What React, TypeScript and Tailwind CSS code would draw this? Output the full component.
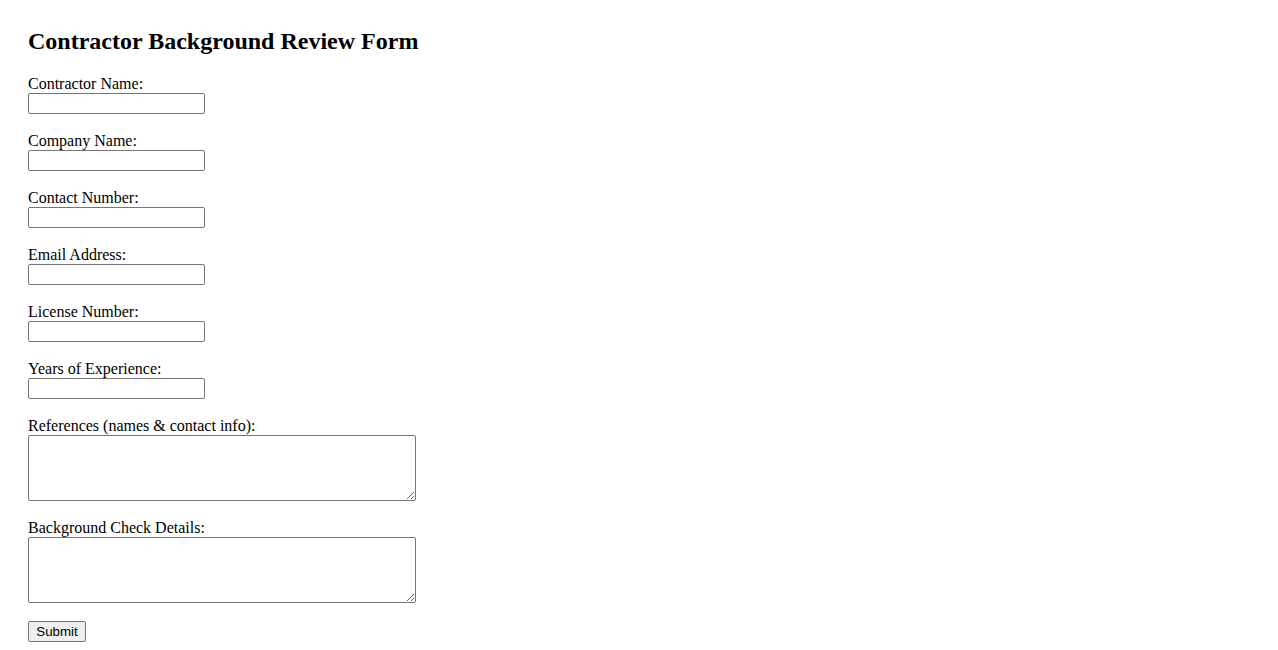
import React from "react";

const inputs = [
  "Contractor Name:",
  "Company Name:",
  "Contact Number:",
  "Email Address:",
  "License Number:",
  "Years of Experience:",
];

const areas = ["References (names & contact info):", "Background Check Details:"];

export default function App() {
  return (
    <div
      className="min-h-[650px] bg-white text-black px-[28px] pt-[28px]"
      style={{ fontFamily: '"Liberation Serif", "Times New Roman", serif' }}
    >
      <h2 className="text-[24px] font-bold leading-[27px] mb-[20px]">
        Contractor Background Review Form
      </h2>
      <form className="flex flex-col items-start" onSubmit={(e) => e.preventDefault()}>
        {inputs.map((l) => (
          <div key={l} className="flex flex-col items-start mb-[18px]">
            <label className="block text-[16px] leading-[18px]">{l}</label>
            <input
              type="text"
              className="block w-[177px] h-[21px] border border-[#767676] rounded-[2px] bg-white px-[2px] text-[13.333px] outline-none"
              style={{ fontFamily: '"Liberation Sans", Arial, sans-serif' }}
            />
          </div>
        ))}
        {areas.map((l) => (
          <div key={l} className="flex flex-col items-start mb-[18px]">
            <label className="block text-[16px] leading-[18px]">{l}</label>
            <textarea
              className="block w-[388px] h-[66px] border border-[#767676] rounded-[2px] bg-white px-[2px] text-[13.333px] outline-none"
              style={{ fontFamily: '"Liberation Mono", monospace' }}
            />
          </div>
        ))}
        <button
          type="submit"
          className="w-[58px] h-[21px] border border-[#767676] rounded-[2px] bg-[#efefef] text-[13.333px] leading-[15px] text-black px-[6px]"
          style={{ fontFamily: '"Liberation Sans", Arial, sans-serif' }}
        >
          Submit
        </button>
      </form>
    </div>
  );
}
